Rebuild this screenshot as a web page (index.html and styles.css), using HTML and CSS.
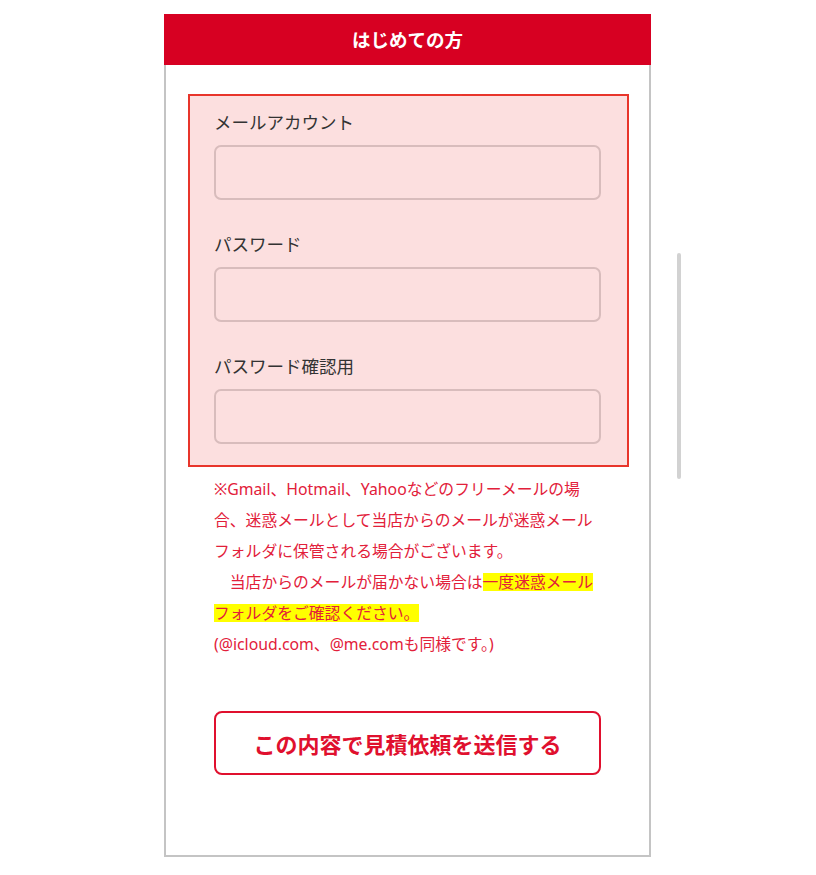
FILE: index.html
```html
<!DOCTYPE html>
<html lang="ja">
<head>
<meta charset="utf-8">
<title>はじめての方</title>
<link rel="stylesheet" href="styles.css">
</head>
<body>
<div class="card">
  <div class="card-head">はじめての方</div>
  <div class="card-body">
    <div class="form-box">
      <div class="field">
        <div class="label">メールアカウント</div>
        <div class="input"></div>
      </div>
      <div class="field">
        <div class="label">パスワード</div>
        <div class="input"></div>
      </div>
      <div class="field">
        <div class="label">パスワード確認用</div>
        <div class="input"></div>
      </div>
    </div>
    <p class="notice">※Gmail、Hotmail、Yahooなどのフリーメールの場<br>合、迷惑メールとして当店からのメールが迷惑メール<br>フォルダに保管される場合がございます。<br>　当店からのメールが届かない場合は<span class="mark">一度迷惑メール</span><br><span class="mark">フォルダをご確認ください。</span><br>(@icloud.com、@me.comも同様です。)</p>
    <div class="button">この内容で見積依頼を送信する</div>
  </div>
</div>
<div class="scrollbar"></div>
</body>
</html>
```
FILE: styles.css
```css
html, body {
  margin: 0;
  padding: 0;
  background: #fff;
}
body {
  font-family: "Noto Sans", "Noto Sans CJK JP", sans-serif;
  color: #333;
  padding-top: 14px;
}
.card {
  margin-left: 164px;
  width: 487px;
}
.card-head {
  height: 51px;
  background: #d70022;
  color: #fff;
  font-family: "Noto Sans CJK JP", sans-serif;
  font-weight: 700;
  font-size: 18.5px;
  line-height: 51px;
  text-align: center;
}
.card-body {
  border: 2px solid #c4c4c4;
  border-top: none;
  padding: 29px 0 80px 22px;
}
.form-box {
  width: 413px;
  border: 2px solid #e8352b;
  background: #fcdfdf;
  padding: 13px 0 21px 24px;
  display: flex;
  flex-direction: column;
  gap: 31px;
}
.label {
  font-family: "Noto Sans CJK JP", sans-serif;
  font-size: 17.5px;
  line-height: 26px;
  color: #333;
  margin-bottom: 10px;
}
.input {
  width: 383px;
  height: 51px;
  border: 2px solid #d8bcbc;
  border-radius: 7px;
  background: #fcdfdf;
}
.notice {
  margin: 7px 0 0 26px;
  font-size: 15.8px;
  line-height: 31px;
  color: #e2203a;
  white-space: nowrap;
}
.mark {
  background: linear-gradient(#ffff00, #ffff00) no-repeat 0 55% / 100% 18px;
}
.button {
  margin: 51px 0 0 26px;
  width: 383px;
  height: 60px;
  border: 2px solid #e0102e;
  border-radius: 8px;
  color: #e0102e;
  font-family: "Noto Sans CJK JP", sans-serif;
  font-weight: 700;
  font-size: 22px;
  line-height: 60px;
  text-align: center;
}
.scrollbar {
  position: absolute;
  left: 677px;
  top: 253px;
  width: 4px;
  height: 226px;
  border-radius: 2px;
  background: #d2d2d2;
}
```
